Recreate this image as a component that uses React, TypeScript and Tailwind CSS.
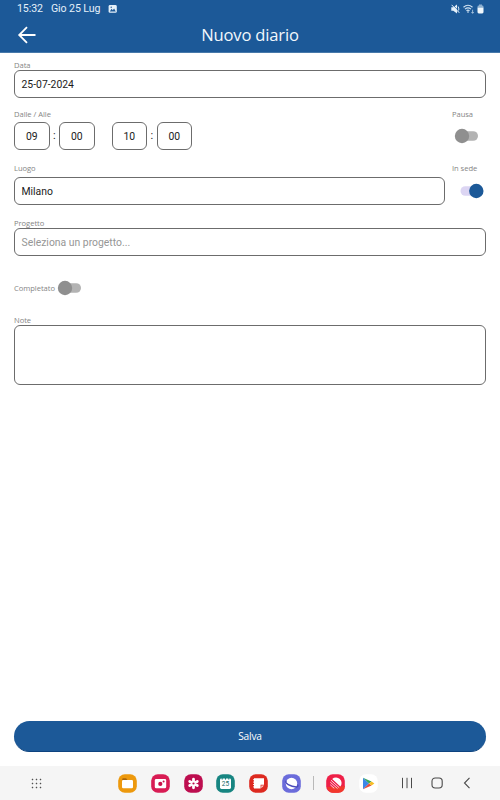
import type { ReactNode } from "react";
import clsx from "clsx";

function Label({ children, className }: { children: ReactNode; className?: string }) {
  return (
    <span
      className={clsx(
        "block h-[10px] whitespace-nowrap font-['Open_Sans',sans-serif] text-[7.6px] leading-[10px] tracking-[-0.05px] text-[#858585]",
        className,
      )}
    >
      {children}
    </span>
  );
}

function Field({ children, className }: { children?: ReactNode; className?: string }) {
  return (
    <div
      className={clsx(
        "flex items-center rounded-[6px] border border-[#6c6c6c] px-[6.5px] pt-[1.5px] text-[10.4px] text-[#1b1b1b]",
        className,
      )}
    >
      {children}
    </div>
  );
}

function TimeBox({ value }: { value: string }) {
  return <Field className="h-[28px] w-[35.5px] justify-center">{value}</Field>;
}

function Time({ hours, minutes }: { hours: string; minutes: string }) {
  return (
    <div className="flex items-center">
      <TimeBox value={hours} />
      <span className="w-[9.5px] pt-px text-center text-[11px] text-[#1b1b1b]">:</span>
      <TimeBox value={minutes} />
    </div>
  );
}

function Toggle({ on = false }: { on?: boolean }) {
  return (
    <svg width="32" height="16" viewBox="0 0 32 16" className="block">
      {on ? (
        <>
          <rect x="8.5" y="3.2" width="20" height="9.6" rx="4.8" fill="#dcd5f3" />
          <circle cx="24.3" cy="8" r="7.2" fill="#1c5998" />
        </>
      ) : (
        <>
          <rect x="6" y="3.2" width="20" height="9.6" rx="4.8" fill="#b3b3b3" />
          <circle cx="10" cy="8" r="7.2" fill="#8f8f8f" />
        </>
      )}
    </svg>
  );
}

function AppIcon({ color, children }: { color: string; children: ReactNode }) {
  return (
    <svg width="19" height="19" viewBox="0 0 19 19" className="block shrink-0">
      <rect x="0.2" y="0.2" width="18.6" height="18.6" rx="6.6" fill={color} />
      {children}
    </svg>
  );
}

function StatusBar() {
  return (
    <div className="flex h-[18px] items-center pr-[16px] pl-[17px] text-[10.6px] text-[#e4f0fa]">
      <span className="w-[34px] tracking-[-0.1px]">15:32</span>
      <span className="w-[57px] whitespace-nowrap tracking-[-0.1px]">Gio 25 Lug</span>
      <svg width="10" height="10" viewBox="0 0 10 10">
        <rect x="0.6" y="1" width="8.2" height="7.8" rx="1.4" fill="#e4f0fa" />
        <path d="M1.8 7.4 3.6 4.8l1.2 1.4L6.1 4.5 7.8 7.4Z" fill="#1c5998" />
        <circle cx="3.2" cy="3.2" r="0.7" fill="#1c5998" />
      </svg>
      <div className="ml-auto flex items-center gap-[3px]">
        <svg width="9" height="10" viewBox="0 0 9 10">
          <path d="M.3 3.3h2L6 .6v8.8L2.3 6.7h-2Z" fill="#e4f0fa" />
          <path d="M7.2 2.5q1.4 2.5 0 5" fill="none" stroke="#e4f0fa" strokeWidth=".9" />
          <path d="m1.300 .4 7.500 7.800" stroke="#1c5998" strokeWidth=".8" />
          <path d="m.6 .8 7.700 8" stroke="#e4f0fa" strokeWidth="1" />
        </svg>
        <svg width="11" height="10" viewBox="0 0 11 10" fill="none" stroke="#cfe1f1">
          <path d="M.5 3.2Q5 -.7 9.5 3.2M2 5.1q3-2.5 6 0M3.5 6.7q1.5-1.2 3 0" strokeWidth="1.2" />
          <path d="m5 7 1 1-1 1-1-1Z" fill="#cfe1f1" stroke="none" />
          <path d="M9.6 5.7v3.6M8.4 8l1.2 1.3L10.8 8" strokeWidth=".7" />
        </svg>
        <svg width="7" height="10" viewBox="0 0 7 10">
          <path d="M2 .5h3v1h.2q1.3 0 1.3 1.3V4H.5V2.8q0-1.3 1.3-1.3H2Z" fill="#8db0d0" />
          <path d="M.5 3.7h6V8q0 1.4-1.3 1.4H1.8Q.5 9.4.5 8Z" fill="#f0f7fc" />
        </svg>
      </div>
    </div>
  );
}

function Header() {
  return (
    <header className="h-[53px] shrink-0 border-b border-[#4779aa] bg-[#1c5998]">
      <StatusBar />
      <div className="grid h-[34px] grid-cols-[1fr_auto_1fr] items-center">
        <svg
          width="20"
          height="20"
          viewBox="0 0 20 20"
          className="ml-[17px]"
          fill="none"
          stroke="#fff"
          strokeWidth="1.8"
        >
          <path d="M18.5 10h-16M10 2.2 2.2 10l7.8 7.8" />
        </svg>
        <h1 className="pt-px font-['Open_Sans',sans-serif] text-[16.6px] leading-none tracking-[-0.2px] text-[#f1f7fc]">
          Nuovo diario
        </h1>
      </div>
    </header>
  );
}

function NavBar() {
  return (
    <nav className="flex h-[34px] shrink-0 items-center bg-[#f5f5f5] pl-[31px]">
      <svg width="11" height="11" viewBox="0 0 11 11" fill="#505050">
        {[1.5, 5.5, 9.5].map((y) =>
          [1.5, 5.5, 9.5].map((x) => (
            <rect key={`${x}-${y}`} x={x - 0.75} y={y - 0.75} width="1.5" height="1.5" rx=".4" />
          )),
        )}
      </svg>
      <div className="ml-[76px] flex items-center gap-[13.8px]">
        <AppIcon color="#ed990d">
          <path d="M4.2 6.2V5.3q0-1 1-1h2.900l1.500 1.900Z" fill="#a9650a" />
          <rect x="4" y="6" width="11" height="8.2" rx="1.2" fill="#fff" />
        </AppIcon>
        <AppIcon color="#d81c54">
          <rect x="3.8" y="5" width="11.4" height="9.3" rx="1.4" fill="#fff" />
          <circle cx="9.3" cy="9.9" r="2.1" fill="#c8114a" />
          <circle cx="12.6" cy="7.5" r="1" fill="#c8114a" />
        </AppIcon>
        <AppIcon color="#bd0e4f">
          <g stroke="#fff" strokeWidth="2.8" strokeLinecap="round">
            <path d="M9.5 5.200v8.600M5.700 7.400l7.600 4.200M13.300 7.400l-7.600 4.200" />
          </g>
          <circle cx="9.5" cy="9.5" r="1.1" fill="#bd0e4f" />
        </AppIcon>
        <AppIcon color="#178581">
          <rect x="4" y="4.4" width="11" height="10.6" rx="1.4" fill="#fff" />
          <path d="M6.2 3.6v2M9.5 3.6v2M12.8 3.6v2" stroke="#178581" strokeWidth="1" />
          <text
            x="9.5"
            y="12.2"
            textAnchor="middle"
            fill="#166b68"
            className="font-['Roboto',sans-serif] text-[6.5px]"
          >
            25
          </text>
        </AppIcon>
        <AppIcon color="#dd2a20">
          <path d="M5 4.200h10v6.500h-3.400v3.900H5Z" fill="#fff" />
          <path d="M12.300 11.400H15l-2.700 2.900Z" fill="#ffd4d0" />
          <path d="M4 5.700h1.500M4 8.100h1.500M4 10.500h1.500M4 12.900h1.500" stroke="#fff" strokeWidth=".9" />
        </AppIcon>
        <AppIcon color="#6b6cdb">
          <circle cx="9.5" cy="9.500" r="5.700" fill="#fff" />
          <path
            d="M4.400 6.700Q2.600 8.500 6.300 10.600t8 2.400q2.500-.4 1.200-2.400"
            fill="none"
            stroke="#4a4abb"
            strokeWidth="1.300"
          />
        </AppIcon>
      </div>
      <div className="ml-[12px] h-[14px] w-px bg-[#b9b9b9]" />
      <div className="ml-[12px] flex items-center gap-[14px]">
        <AppIcon color="#ee2048">
          <path d="M1 13q1.5 5.8 6 5.8h5q6.8 0 6.8-7L12 13Z" fill="#f2382c" />
          <path d="M6.200 4.900A5.600 5.600 0 0 1 14.300 12.600Z" fill="#fff" />
          <path d="m5 6.200 8.200 7.500M4.300 8.200l7.200 6.400M4.300 10.800l4 3.600" stroke="#fff" strokeWidth=".8" />
        </AppIcon>
        <AppIcon color="#fff">
          <path d="M4 3.800v11.400l6-5.700Z" fill="#3c86e8" />
          <path d="m4 3.800 6 5.700 2.500-2.100Z" fill="#35a65a" />
          <path d="m4 15.200 6-5.700 2.500 2.100Z" fill="#e44b3e" />
          <path d="m12.500 7.400 2.900 2.100-2.900 2.100L10 9.500Z" fill="#f6bd24" />
        </AppIcon>
      </div>
      <svg width="72" height="14" viewBox="0 0 72 14" className="ml-[22px]" fill="none" stroke="#4a4a4a">
        <path d="M2.5 1.800v10.400M7 1.800v10.400M11.500 1.800v10.400" />
        <rect x="32" y="2" width="10.200" height="10" rx="3.200" strokeWidth="1.1" />
        <path d="m69.500 1.800-5 5.200 5 5.200" strokeWidth="1.1" />
      </svg>
    </nav>
  );
}

export default function App() {
  return (
    <div className="flex h-[800px] w-[500px] flex-col overflow-hidden bg-white font-['Roboto',sans-serif]">
      <Header />
      <main className="flex flex-1 flex-col px-[14px] pt-[7px]">
        <Label>Data</Label>
        <Field className="h-[28px]">25-07-2024</Field>

        <div className="mt-[11px] flex justify-between">
          <div>
            <Label>Dalle / Alle</Label>
            <div className="mt-[3px] flex gap-[17px]">
              <Time hours="09" minutes="00" />
              <Time hours="10" minutes="00" />
            </div>
          </div>
          <div className="w-[34px]">
            <Label>Pausa</Label>
            <div className="mt-[9px]">
              <Toggle />
            </div>
          </div>
        </div>

        <div className="mt-[13px] flex justify-between">
          <div className="w-[431px]">
            <Label>Luogo</Label>
            <Field className="mt-[4px] h-[28px]">Milano</Field>
          </div>
          <div className="w-[34px]">
            <Label>In sede</Label>
            <div className="mt-[9.5px]">
              <Toggle on />
            </div>
          </div>
        </div>

        <Label className="mt-[13px]">Progetto</Label>
        <Field className="h-[28px]">
          <span className="text-[#969696]">Seleziona un progetto...</span>
        </Field>

        <div className="mt-[23.5px] flex h-4 items-center">
          <Label className="w-[41px]">Completato</Label>
          <Toggle />
        </div>

        <Label className="mt-[19.5px]">Note</Label>
        <Field className="h-[60px]" />

        <button
          type="button"
          className="mt-auto mb-[14px] h-[31px] rounded-full border-b border-[#0d437f] bg-[#1c5998] pt-[2px] font-['Open_Sans',sans-serif] text-[10.2px] font-medium tracking-[-0.2px] text-white"
        >
          Salva
        </button>
      </main>
      <NavBar />
    </div>
  );
}
